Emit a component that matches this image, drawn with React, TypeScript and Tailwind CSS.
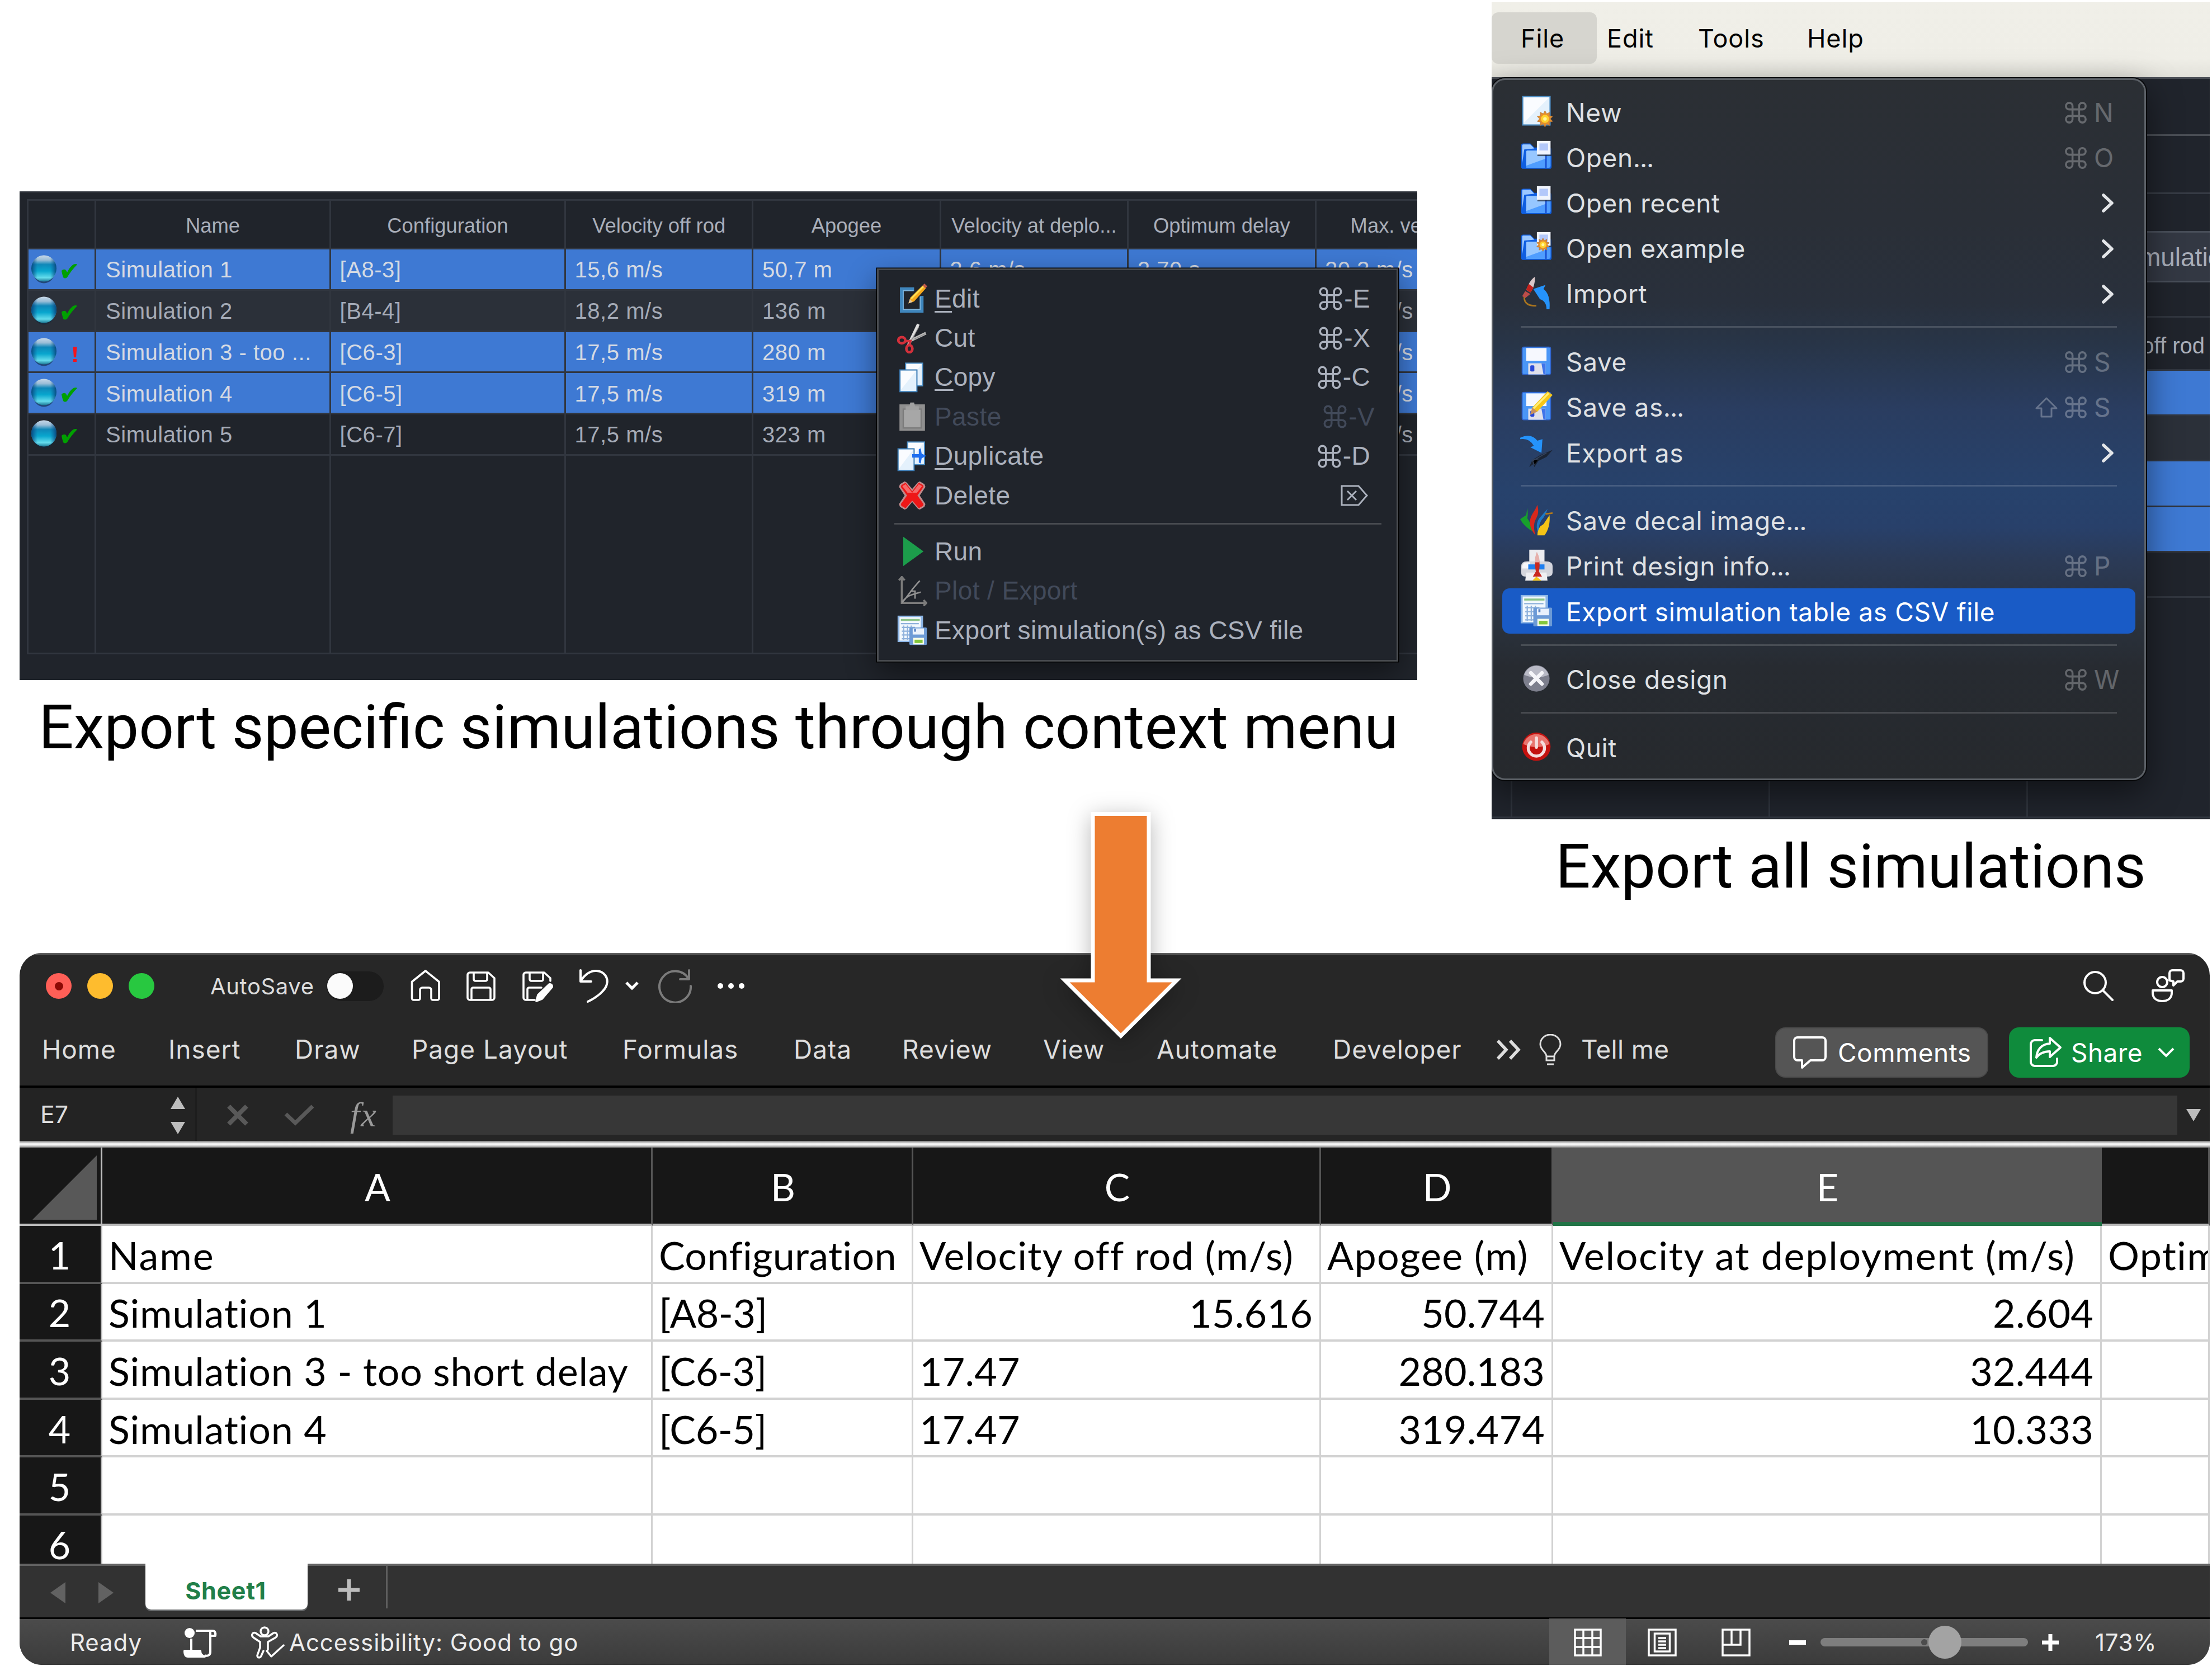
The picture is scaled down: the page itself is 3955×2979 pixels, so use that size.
import React from "react";
import { Command } from "lucide-react";

/* ---------- small coloured menu icons, drawn on a 32 unit grid ---------- */

function Sheet({ x, y, w, h, edge = "#4d8ec4" }: { x: number; y: number; w: number; h: number; edge?: string }) {
  return (
    <g>
      <rect x={x} y={y} width={w} height={h} fill="#e4f1fc" stroke={edge} strokeWidth="1.2" />
      <path d={`M${x + 1} ${y + 1}h${w - 2}L${x + 1} ${y + h - 2}z`} fill="#fff" opacity="0.8" />
    </g>
  );
}

function Burst({ cx, cy, r }: { cx: number; cy: number; r: number }) {
  const pts: string[] = [];
  for (let i = 0; i < 20; i++) {
    const a = (Math.PI * i) / 10;
    const q = i % 2 ? r * 0.66 : r;
    pts.push(`${(cx + q * Math.sin(a)).toFixed(2)},${(cy - q * Math.cos(a)).toFixed(2)}`);
  }
  return (
    <g>
      <polygon points={pts.join(" ")} fill="#e58f2c" stroke="#b5773c" strokeWidth="0.5" />
      <circle cx={cx} cy={cy} r={r * 0.5} fill="#ffd22e" />
      <circle cx={cx} cy={cy} r={r * 0.22} fill="#fff6a0" />
    </g>
  );
}

function Folder({ children }: { children?: React.ReactNode }) {
  return (
    <g>
      <path d="M1 5q0-2 2-2h7l4 4h15q2 0 2 2v17q0 2-2 2H3q-2 0-2-2z" fill="#0f5ee0" />
      <path d="M2 5q0-1 1-1h7l4 4-10 1-2 14z" fill="#9cc8ff" />
      <path d="M6 11q0-1 1-1h23v15q0 2-2 2H6z" fill="#4f9dff" />
      <path d="M6 11q0-1 1-1h10v4h8v4L6 25z" fill="#a9d2ff" opacity="0.8" />
      <path d="M25.5 14v13" stroke="#0c3fc8" strokeWidth="1.2" />
      <rect x="17" y="1.500" width="14" height="14" fill="#20242c" opacity="0.7" />
      <rect x="16.500" y="0.500" width="13.500" height="13.500" fill="#f1f5fd" />
      <rect x="19" y="3" width="8.500" height="7" fill="#b3c8fa" />
      {children}
    </g>
  );
}

function Floppy() {
  return (
    <g>
      <rect x="2" y="2" width="28" height="27" rx="1.500" fill="#4a96f6" stroke="#2f63cc" strokeWidth="1" />
      <rect x="6" y="3" width="20" height="12.500" fill="#f6f8fe" />
      <rect x="8" y="18" width="17" height="11" fill="#dfe0ea" />
      <rect x="10" y="20" width="4" height="6" rx="1" fill="#2848d8" />
      <path d="M21 18h4v11h-2z" fill="#3f74ea" />
    </g>
  );
}

function TableDisk() {
  return (
    <g>
      <rect x="0.500" y="0.500" width="27" height="28" fill="#8db6e6" />
      <rect x="2.500" y="2" width="22.500" height="25" fill="#f2f8fd" />
      <rect x="4" y="4" width="20" height="2" fill="#8cc48a" />
      <path d="M4 9h19M5 13h14M5 17h9M5 21h9M5 25h9M7 11v15M11 11v15M15 11v6" stroke="#8fb2dc" strokeWidth="1.300" />
      <rect x="13" y="13" width="18.500" height="18.500" rx="1" fill="#6c9ad6" />
      <rect x="16.500" y="14" width="12" height="6.500" fill="#e9f1fc" />
      <rect x="18" y="14.500" width="2" height="3" fill="#5a84c4" />
      <rect x="17" y="24" width="11.500" height="7" fill="#f6fbe8" />
      <rect x="18.500" y="26" width="8.500" height="3.500" fill="#83c63c" />
    </g>
  );
}

const icons: Record<string, React.ReactNode> = {
  edit: (
    <g>
      <path d="M26 13v16H5V6h13" fill="none" stroke="#3f86bd" strokeWidth="4" />
      <path d="M24.500 14v13.500H6.500V7.500h11" fill="none" stroke="#7fb5dc" strokeWidth="1" />
      <path d="M12 21l2-6L27 2l3.500 3L18 19z" fill="#f7a81b" />
      <path d="M15 16L28 3" stroke="#ffe35a" strokeWidth="1.600" />
      <path d="M12 21l1.500-4.500 3 3z" fill="#e6c9a0" />
      <path d="M27 2l2-2 3 3-2 2z" fill="#c25b4a" />
    </g>
  ),
  cut: (
    <g fill="none">
      <path d="M12 23L22.500 1" stroke="#dedede" strokeWidth="3" />
      <path d="M13 19L30.500 10.500" stroke="#b9b9b9" strokeWidth="3" />
      <path d="M14 20L23 4M18 17l12-6" stroke="#8b8b8b" strokeWidth="0.800" />
      <ellipse cx="5" cy="18" rx="3.700" ry="3.200" stroke="#d3303b" strokeWidth="2.800" />
      <ellipse cx="13" cy="27" rx="3.200" ry="3.800" stroke="#d3303b" strokeWidth="2.800" />
      <path d="M8 19l6 0-1 4" stroke="#d3303b" strokeWidth="2.600" />
    </g>
  ),
  copy: (
    <g>
      <Sheet x={9} y={0.8} w={18} h={24} />
      <Sheet x={3} y={8} w={18} h={23} edge="#3a7bb4" />
    </g>
  ),
  paste: (
    <g>
      <rect x="2.500" y="3" width="27" height="28" fill="#8f8f8f" />
      <rect x="6.500" y="8" width="19" height="20" fill="#a7a7a7" stroke="#7c7c7c" strokeWidth="1.400" />
      <path d="M9 5h4l1-4h4l1 4h4v4H9z" fill="#a0a0a0" />
    </g>
  ),
  duplicate: (
    <g>
      <Sheet x={11} y={0.8} w={18} h={24} />
      <Sheet x={1} y={8} w={17} h={23} edge="#3a7bb4" />
      <path d="M16 13.700h7V8.500l2-1 1 5.500 5 2.500-5 2.500-1 5.500-2-1v-5.200h-7z" fill="#1f6ff0" />
    </g>
  ),
  delete: (
    <g>
      <path d="M3 4l5-3 2 1 6 7 6-7 2-1 5 3 1 3-6 9 6 9-1 3-5 3-2-1-6-7-6 7-2 1-5-3-1-3 6-9-6-9z" fill="#c08a8c" />
      <path d="M4.500 5L9 2.500l7 9 7-9L27.500 5 28 7l-6.500 9 6.500 9-.5 2L23 29.500l-7-8-7 8L4.500 27 4 25l6.500-9L4 7z" fill="#ee1717" />
      <path d="M5.500 6L9 4l7 9 7-9 3.500 2-5.500 7H11z" fill="#f56a6a" />
    </g>
  ),
  run: <path d="M6.500 0.500L28 16 6.500 31.500z" fill="#1c9d4b" />,
  plot: (
    <g fill="none" stroke="#7b7b7b" strokeWidth="2.200">
      <path d="M5 1v27.500h26M2 4.500L5 1l3 3.500M28 25.500l3 3-3 3" />
      <path d="M5 28C11 23 11 19 24 5M5 28C11 20 15 20 25 17M14 16h5v8" stroke="#929292" strokeWidth="1.600" />
    </g>
  ),
  csv: <TableDisk />,
  new: (
    <g>
      <Sheet x={2.5} y={1.5} w={27} h={28} />
      <Burst cx={24.5} cy={23.5} r={8} />
    </g>
  ),
  open: <Folder />,
  example: (
    <Folder>
      <Burst cx={22.5} cy={13} r={6.5} />
    </Folder>
  ),
  import: (
    <g>
      <path d="M14.500 0q-5 3-8.500 13l4 2.500Q15 9 14.500 0z" fill="#d9c6c8" />
      <path d="M8.500 7q-2 3-2.500 6l4 2.500q2-2 3-5z" fill="#c3221d" />
      <path d="M5 14l-3 5 3 2 5-4z" fill="#bb4d49" />
      <path d="M4 20q0 9 12 8.500" fill="none" stroke="#a8741f" strokeWidth="1.600" />
      <path d="M13 12l12-4-2 4q7 5 6 20h-3q0-8-6.500-10z" fill="#2593fb" />
    </g>
  ),
  save: <Floppy />,
  saveas: (
    <g>
      <Floppy />
      <path d="M10 24l2-7L27 1l5 3.500L17 21z" fill="#f6c718" />
      <path d="M13 18L28 3" stroke="#fff078" strokeWidth="1.800" />
      <path d="M10 24l2-7 5 4z" fill="#c79060" />
    </g>
  ),
  export: (
    <g>
      <path d="M0 2q11-5 17 3l5-1.500L21 17 10 11.500l3.500-1.500Q9 2 0 3.500z" fill="#2593fb" />
      <path d="M9 31l3-7 8-5 12-5-6 7-8 4-4 6-1-3z" fill="#1b2433" />
      <path d="M12 25l14-8M14 29l-2-5 6-1" stroke="#33415a" strokeWidth="1" />
    </g>
  ),
  decal: (
    <g>
      <path d="M0 15l6-4 1-7q1 7 0 10 4 6 7 14Q4 23 0 15z" fill="#17a12c" />
      <path d="M15 31Q6 20 12 10q3-4 5-9 2 8-1 13-4 6-1 17z" fill="#d8281c" />
      <path d="M17 27q-2-8 2-13l8-9q-2 7-6 11-3 5-2 9z" fill="#1d78c4" />
      <path d="M17 31q0-8 6-11l6-9q1 12-5 20z" fill="#f4c417" />
      <path d="M25 10l7-1" stroke="#b57a18" strokeWidth="1.600" />
    </g>
  ),
  print: (
    <g>
      <rect x="9" y="0.500" width="15" height="14" fill="#ececf0" />
      <path d="M1 17q0-5 6-5h18q7 0 7 5v6q0 4-5 4H5q-4 0-4-4z" fill="#d5d6dd" />
      <path d="M2 17q1-4 5-4h3l-2 6H2z" fill="#f6f6fa" />
      <rect x="8" y="15" width="16" height="5" fill="#1f7ff0" />
      <path d="M6 23h20l1 8H5z" fill="#efeff2" />
      <path d="M16.500 3q4 9 2 19l3 5h-9l3-5q-2-10 1-19z" fill="#c9281f" />
      <path d="M16.500 3q3 5 2.500 10h-4.500q0-6 2-10z" fill="#e6b0ac" />
      <path d="M12 31l4-4 5 4z" fill="#f4c417" />
    </g>
  ),
  close: (
    <g>
      <circle cx="16" cy="15.500" r="13" fill="#7d7f8d" />
      <path d="M4 12a12.500 12.500 0 0 1 24 0q-12 5-24 0z" fill="#b9bac6" />
      <path d="M10.500 10l11 11M21.500 10l-11 11" stroke="#f4f4f8" strokeWidth="3.600" strokeLinecap="round" />
    </g>
  ),
  quit: (
    <g>
      <circle cx="16" cy="15.500" r="14" fill="#c4120f" />
      <path d="M3 13a13.500 13.500 0 0 1 26 0q-13 6-26 0z" fill="#e8756f" />
      <path d="M10.500 11a8 8 0 1 0 11 0" fill="none" stroke="#f4dcdc" strokeWidth="3" strokeLinecap="round" />
      <path d="M16 7v9" stroke="#f4dcdc" strokeWidth="3.200" strokeLinecap="round" />
    </g>
  ),
};

function MenuIcon({ name, className }: { name: string; className: string }) {
  return (
    <svg viewBox="0 0 32 32" className={className}>
      {icons[name]}
    </svg>
  );
}

/* ---------- simulation table with its context menu ---------- */

const simCols = "grid grid-cols-[121px_420px_420px_335.4px_335.4px_335.4px_335.4px_335.4px]";
const simHeaders = ["", "Name", "Configuration", "Velocity off rod", "Apogee", "Velocity at deplo...", "Optimum delay", "Max. velocity"];

const sims = [
  { sel: true, ok: true, bg: "bg-[#3e79d3]", cells: ["Simulation 1", "[A8-3]", "15,6 m/s", "50,7 m", "2,6 m/s", "2,70 s", "20,3 m/s"] },
  { sel: false, ok: true, bg: "bg-[#2b3039]", cells: ["Simulation 2", "[B4-4]", "18,2 m/s", "136 m", "", "", "48,1 m/s"] },
  { sel: true, ok: false, bg: "bg-[#3e79d3]", cells: ["Simulation 3 - too ...", "[C6-3]", "17,5 m/s", "280 m", "", "", "97,4 m/s"] },
  { sel: true, ok: true, bg: "bg-[#3e79d3]", cells: ["Simulation 4", "[C6-5]", "17,5 m/s", "319 m", "", "", "97,4 m/s"] },
  { sel: false, ok: true, bg: "bg-[#20242b]", cells: ["Simulation 5", "[C6-7]", "17,5 m/s", "323 m", "", "", "97,4 m/s"] },
];

function StatusCell({ ok }: { ok: boolean }) {
  return (
    <svg viewBox="0 0 118 70" className="h-[70px] w-[118px]">
      <defs>
        <linearGradient id="ball" x1="0" y1="0" x2="0" y2="1">
          <stop offset="0" stopColor="#e8eef6" />
          <stop offset="0.180" stopColor="#b4cfe2" />
          <stop offset="0.350" stopColor="#0f8fbe" />
          <stop offset="0.600" stopColor="#08b4d8" />
          <stop offset="0.850" stopColor="#74f2fa" />
          <stop offset="1" stopColor="#1f7f96" />
        </linearGradient>
        <linearGradient id="ballEdge" x1="0" y1="0" x2="1" y2="0">
          <stop offset="0" stopColor="#0a3f78" stopOpacity="0.9" />
          <stop offset="0.250" stopColor="#0a5a98" stopOpacity="0.15" />
          <stop offset="0.750" stopColor="#0a5a98" stopOpacity="0.15" />
          <stop offset="1" stopColor="#0a3f78" stopOpacity="0.9" />
        </linearGradient>
      </defs>
      <ellipse cx="27.500" cy="38" rx="20" ry="22.500" fill="#10283f" opacity="0.6" />
      <ellipse cx="27.500" cy="34" rx="22.500" ry="23.500" fill="url(#ball)" />
      <ellipse cx="27.500" cy="34" rx="22.500" ry="23.500" fill="url(#ballEdge)" />
      {ok ? (
        <path d="M59 38q4-4 8-1l2 4Q74 31 80 27q5-2 7 0-10 10-18 23-4 3-7 0-2-6-3-12z" fill="#00a000" />
      ) : (
        <path d="M79.500 26h7l-1.500 19h-4zM80 48h6v5h-6z" fill="#f5141c" />
      )}
    </svg>
  );
}

const ctxItems = [
  { icon: "edit", m: "E", rest: "dit", key: "E" },
  { icon: "cut", m: "", rest: "Cut", key: "X" },
  { icon: "copy", m: "C", rest: "opy", key: "C" },
  { icon: "paste", m: "", rest: "Paste", key: "V", off: true },
  { icon: "duplicate", m: "D", rest: "uplicate", key: "D" },
  { icon: "delete", m: "", rest: "Delete", key: "del" },
  null,
  { icon: "run", m: "", rest: "Run" },
  { icon: "plot", m: "", rest: "Plot / Export", off: true },
  { icon: "csv", m: "", rest: "Export simulation(s) as CSV file" },
];

function ContextMenu() {
  return (
    <div className="absolute left-[1533px] top-[136px] h-[703px] w-[932px] border-[3px] border-[#494c50] bg-[#20242b] pt-[16px] text-[46px] tracking-[0.4px] shadow-[0_0_0_1.5px_#000,0_20px_50px_rgba(0,0,0,0.45)]">
      {ctxItems.map((it, i) =>
        it === null ? (
          <div key={i} className="flex h-[29.8px] items-center pl-[28px] pr-[27px]">
            <div className="h-[3px] w-full bg-[#484b50]" />
          </div>
        ) : (
          <div key={i} className={`flex h-[70.4px] items-center pl-[33px] ${it.off ? "pr-[39px] text-[#424a5a]" : "pr-[47px] text-[#abb1bd]"}`}>
            <MenuIcon name={it.icon} className="h-[54px] w-[54px]" />
            <span className="ml-[13px] flex-1 whitespace-pre">
              {it.m && <span className="underline decoration-[3px] underline-offset-[6px]">{it.m}</span>}
              {it.rest}
            </span>
            {it.key === "del" ? (
              <svg viewBox="0 0 50 38" className="mr-[3px] h-[38px] w-[50px]" fill="none" stroke="#abb1bd" strokeWidth="3">
                <path d="M2 2h30l15 17-15 17H2zM12 11l16 16M28 11L12 27" />
              </svg>
            ) : (
              it.key && (
                <span className="flex items-center">
                  <Command className="-mr-[1px] h-[50px] w-[50px]" strokeWidth={1.7} />-{it.key}
                </span>
              )
            )}
          </div>
        ),
      )}
    </div>
  );
}

function SimulationPanel() {
  return (
    <div className="relative h-[874px] w-[2499px] overflow-hidden border-t-2 border-[#4a4e55] bg-[#20242b] pl-[13px] pt-[12px] font-['Liberation_Sans',Arial,sans-serif]">
      <div className="w-[2640px] border-l-[3px] border-t-[3px] border-[#31363f]">
        <div className={`${simCols} h-[87px] text-[36.4px] text-[#a9aeb9]`}>
          {simHeaders.map((h, i) => (
            <div key={i} className="flex items-center justify-center whitespace-nowrap border-b-[3px] border-r-[3px] border-[#31363f] pt-[6px]">
              {h}
            </div>
          ))}
        </div>
        {sims.map((s, r) => (
          <div key={r} className={`${simCols} h-[73.75px] text-[40px] tracking-[0.55px] ${s.bg} ${s.sel ? "text-[#d5dae3]" : "text-[#a5abb7]"}`}>
            <div className="overflow-hidden border-b-[3px] border-r-[3px] border-[#31363f]">
              <StatusCell ok={s.ok} />
            </div>
            {s.cells.map((c, i) => (
              <div key={i} className={`flex items-center whitespace-nowrap border-b-[3px] border-r-[3px] border-[#31363f] pt-[2px] ${i === 0 ? "pl-[17px]" : "pl-[15.5px]"}`}>
                {c}
              </div>
            ))}
          </div>
        ))}
        <div className={`${simCols} h-[355px]`}>
          {simHeaders.map((_, i) => (
            <div key={i} className="border-b-[3px] border-r-[3px] border-[#31363f]" />
          ))}
        </div>
      </div>
      <ContextMenu />
    </div>
  );
}

/* ---------- application window with the File menu open ---------- */

const fileItems: (null | { icon: string; label: string; more?: boolean; key?: string; shift?: boolean; sub?: boolean; sel?: boolean })[] = [
  { icon: "new", label: "New", key: "N" },
  { icon: "open", label: "Open", more: true, key: "O" },
  { icon: "open", label: "Open recent", sub: true },
  { icon: "example", label: "Open example", sub: true },
  { icon: "import", label: "Import", sub: true },
  null,
  { icon: "save", label: "Save", key: "S" },
  { icon: "saveas", label: "Save as", more: true, key: "S", shift: true },
  { icon: "export", label: "Export as", sub: true },
  null,
  { icon: "decal", label: "Save decal image", more: true },
  { icon: "print", label: "Print design info", more: true, key: "P" },
  { icon: "csv", label: "Export simulation table as CSV file", sel: true },
  null,
  { icon: "close", label: "Close design", key: "W" },
  null,
  { icon: "quit", label: "Quit" },
];

function FileMenu() {
  return (
    <div className="absolute left-0 top-[136px] h-[1255px] w-[1170px] rounded-[24px] border-[3px] border-[#5c6167] bg-[linear-gradient(180deg,#2b2f34_0%,#2a2f37_20%,#29303c_32%,#283548_38%,#2a3d60_47%,#27426c_59%,#28406a_64%,#2b3a56_69%,#2a323d_78%,#272b31_84%,#26292d_100%)] pt-[15.5px] text-[46px] tracking-[0.62px] text-[#dfe1e4] shadow-[0_0_0_2px_#08090b,0_20px_60px_rgba(0,0,0,0.5)]">
      {fileItems.map((it, i) =>
        it === null ? (
          <div key={i} className="flex h-[40.6px] items-center pl-[49px] pr-[49px]">
            <div className="h-[3px] w-full bg-white/15" />
          </div>
        ) : (
          <div key={i} className={`mx-[16px] flex h-[81.2px] items-center rounded-[13px] pl-[32px] ${it.sel ? "bg-[#195bc6] text-white" : ""}`}>
            <MenuIcon name={it.icon} className="h-[58px] w-[58px]" />
            <span className="ml-[24px] flex-1 whitespace-nowrap pt-[4px]">
              {it.label}
              {it.more && <span className="tracking-[-1.2px]">...</span>}
            </span>
            {it.shift && (
              <svg viewBox="0 0 42 38" className="mr-[8px] mt-[4px] h-[38px] w-[42px] text-white/28" fill="none" stroke="currentColor" strokeWidth="3" strokeLinejoin="round">
                <path d="M21 2L3 20h9v15h18V20h9z" />
              </svg>
            )}
            {it.key && (
              <span className="flex w-[130px] items-center pt-[4px] text-white/28">
                <Command className="mr-[9px] h-[47px] w-[47px]" strokeWidth={1.8} />
                {it.key}
              </span>
            )}
            {it.sub && (
              <svg viewBox="0 0 24 38" className="mr-[37px] mt-[4px] h-[38px] w-[24px]" fill="none" stroke="#e3e5e8" strokeWidth="5.500" strokeLinecap="round" strokeLinejoin="round">
                <path d="M4 5l15 14L4 33" />
              </svg>
            )}
          </div>
        ),
      )}
    </div>
  );
}

function AppPanel() {
  return (
    <div className="relative flex h-[1461px] w-[1284px] flex-col overflow-hidden bg-[#20242c] font-['Inter',sans-serif]">
      <div className="flex h-[134px] shrink-0 items-start bg-[linear-gradient(180deg,#f0efe8_0%,#efeee7_75%,#e2e1da_100%)] pt-[18px] text-[45px] tracking-[0.9px] text-black">
        <div className="flex h-[92px] w-[188px] items-center rounded-[12px] bg-[#d6d5cf] pl-[52px] pt-[2px]">File</div>
        <div className="flex h-[92px] w-[181px] items-center pl-[18px] pt-[2px]">Edit</div>
        <div className="flex h-[92px] w-[195px] items-center pt-[2px]">Tools</div>
        <div className="flex h-[92px] items-center pt-[2px]">Help</div>
      </div>
      <div className="h-[105px] shrink-0 border-b-[3px] border-t-[3px] border-[#4a4e55]" />
      <div className="h-[104px] shrink-0 border-b-[3px] border-[#363b44]" />
      <div className="h-[66px] shrink-0" />
      <div className="flex h-[92px] shrink-0 items-center border-b-[3px] border-t-[3px] border-[#484e59] bg-[#333843] pl-[1117px] pt-[3px] font-['Liberation_Sans',sans-serif] text-[46px] text-[#a9aeb9]">
        Simulations
      </div>
      <div className="h-[63px] shrink-0 border-b-[3px] border-[#31363f]" />
      <div className="flex h-[95px] shrink-0 items-center justify-end border-b-[3px] border-[#31363f] pr-[9px] pt-[8px] font-['Liberation_Sans',sans-serif] text-[40px] text-[#a9aeb9]">
        Velocity off rod
      </div>
      <div className="h-[81.2px] shrink-0 border-b-[3px] border-[#31363f] bg-[#3e79d3]" />
      <div className="h-[81.2px] shrink-0 border-b-[3px] border-[#31363f] bg-[#2b3039]" />
      <div className="h-[81.2px] shrink-0 border-b-[3px] border-[#31363f] bg-[#3e79d3]" />
      <div className="h-[81.2px] shrink-0 border-b-[3px] border-[#31363f] bg-[#3e79d3]" />
      <div className="h-[81.2px] shrink-0 border-b-[3px] border-[#31363f]" />
      <div className="grid h-[394px] shrink-0 grid-cols-[37px_461px_461px_1fr] border-b-[3px] border-[#31363f]">
        <div className="border-r-[3px] border-[#2f343d]" />
        <div className="border-r-[3px] border-[#2f343d]" />
        <div className="border-r-[3px] border-[#2f343d]" />
      </div>
      <FileMenu />
    </div>
  );
}

/* ---------- spreadsheet window ---------- */

function Glyph({ className, sw = 4, children }: { className: string; sw?: number; children: React.ReactNode }) {
  return (
    <svg viewBox="0 0 60 60" className={`h-[60px] w-[60px] shrink-0 ${className}`} fill="none" stroke="currentColor" strokeWidth={sw} strokeLinejoin="round" strokeLinecap="round">
      {children}
    </svg>
  );
}

function TitleBar() {
  return (
    <div className="flex h-[118px] items-center pl-[47px] text-white">
      <div className="flex h-[46px] w-[46px] items-center justify-center rounded-full bg-[#ff5f57]">
        <div className="h-[15px] w-[15px] rounded-full bg-[#8c0a05]" />
      </div>
      <div className="ml-[28px] h-[46px] w-[46px] rounded-full bg-[#febc2e]" />
      <div className="ml-[28px] h-[46px] w-[46px] rounded-full bg-[#28c840]" />
      <span className="ml-[100px] w-[208px] whitespace-nowrap pt-[2px] text-[40px] tracking-[0.65px] text-[#dcdcdc]">AutoSave</span>
      <div className="flex h-[53px] w-[102px] items-center rounded-full bg-[#1c1c1c] pl-[1px]">
        <div className="h-[46px] w-[46px] rounded-full bg-[#fbfbfb]" />
      </div>
      <Glyph className="ml-[45px]" sw={3.6}>
        <path d="M29.700 3L54 22.500V52a3 3 0 0 1-3 3h-8a3 3 0 0 1-3-3V37a4 4 0 0 0-4-4H24a4 4 0 0 0-4 4v15a3 3 0 0 1-3 3H8.500a3 3 0 0 1-3-3V22.500z" />
      </Glyph>
      <Glyph className="ml-[39px]" sw={3.6}>
        <path d="M10 6h33l11 10v35a4 4 0 0 1-4 4H10a4 4 0 0 1-4-4V10a4 4 0 0 1 4-4zM17 6v12a3 3 0 0 0 3 3h18a3 3 0 0 0 3-3V6M13 55V36a3 3 0 0 1 3-3h28a3 3 0 0 1 3 3v19" />
      </Glyph>
      <Glyph className="ml-[40px]" sw={3.6}>
        <path d="M26 55H10a4 4 0 0 1-4-4V10a4 4 0 0 1 4-4h33l11 10v5M17 6v12a3 3 0 0 0 3 3h18a3 3 0 0 0 3-3V6M13 55V36a3 3 0 0 1 3-3h22" />
        <path d="M29 57l3-11 20-19a4 4 0 0 1 5 5L39 53z" fill="currentColor" />
      </Glyph>
      <Glyph className="ml-[43px]">
        <path d="M5 2v20h19M5 21C14 8 24 2 34 3c14 1 21 13 18 24-2 10-18 24-34 31" />
      </Glyph>
      <svg viewBox="0 0 24 16" className="ml-[25px] h-[16px] w-[24px]" fill="none" stroke="currentColor" strokeWidth="5">
        <path d="M2 2l10 10L22 2" />
      </svg>
      <Glyph className="ml-[35px] text-[#7b7b7b]">
        <path d="M55 2v16H39M54 17A28 28 0 1 0 58 30" />
      </Glyph>
      <div className="ml-[46px] flex gap-[9px]">
        <div className="h-[10px] w-[10px] rounded-full bg-white" />
        <div className="h-[10px] w-[10px] rounded-full bg-white" />
        <div className="h-[10px] w-[10px] rounded-full bg-white" />
      </div>
      <Glyph className="ml-auto">
        <circle cx="24" cy="24" r="19" />
        <path d="M38 38l17 17" />
      </Glyph>
      <Glyph className="ml-[64px] mr-[45px]">
        <circle cx="20" cy="23" r="9" />
        <path d="M3 38h34v4c0 10-7 15-17 15S3 52 3 42zM33 20V7a5 5 0 0 1 5-5h15a5 5 0 0 1 5 5v10a5 5 0 0 1-5 5h-6l-7 7v-7z" />
      </Glyph>
    </div>
  );
}

const ribbon = [
  { t: "Home", w: "w-[226px]" },
  { t: "Insert", w: "w-[226px]" },
  { t: "Draw", w: "w-[209px]" },
  { t: "Page Layout", w: "w-[377px]" },
  { t: "Formulas", w: "w-[306px]" },
  { t: "Data", w: "w-[194px]" },
  { t: "Review", w: "w-[252px]" },
  { t: "View", w: "w-[203px]" },
  { t: "Automate", w: "w-[315px]" },
  { t: "Developer", w: "w-[288px]" },
];

function RibbonTabs() {
  return (
    <div className="flex h-[119px] items-center pl-[40px] text-[46px] text-[#dedede]">
      <div className="flex items-center whitespace-nowrap pb-[10px] tracking-[0.95px]">
        {ribbon.map((r) => (
          <span key={r.t} className={r.w}>
            {r.t}
          </span>
        ))}
        <svg viewBox="0 0 46 36" className="ml-[4px] h-[36px] w-[46px]" fill="none" stroke="currentColor" strokeWidth="5.500">
          <path d="M3 2l15 16L3 34M25 2l15 16-15 16" />
        </svg>
        <svg viewBox="0 0 40 56" className="ml-[31px] h-[56px] w-[40px]" fill="none" stroke="currentColor" strokeWidth="3">
          <path d="M13 40c0-8-11-11-11-22a18 17 0 0 1 36 0c0 11-11 14-11 22zM13 40v7h14v-7M14 54h12" />
        </svg>
        <span className="ml-[35px] tracking-[0.3px]">Tell me</span>
      </div>
      <div className="ml-auto flex h-[90px] w-[381px] items-center rounded-[18px] border-2 border-[#4a4a4a] bg-[#555] pl-[30px] text-white">
        <Glyph className="">
          <path d="M8 3h44a6 6 0 0 1 6 6v29a6 6 0 0 1-6 6H31L16 57V44H8a6 6 0 0 1-6-6V9a6 6 0 0 1 6-6z" />
        </Glyph>
        <span className="ml-[20px] pt-[2px] tracking-[0.5px]">Comments</span>
      </div>
      <div className="ml-[37px] mr-[36px] flex h-[90px] w-[323px] items-center rounded-[18px] bg-[#0f8b3c] pl-[35px] text-white">
        <Glyph className="">
          <path d="M24 8H11a7 7 0 0 0-7 7v32a7 7 0 0 0 7 7h33a7 7 0 0 0 7-7v-6" />
          <path d="M38 4l19 17-19 17V28c-11 0-18 3-24 11 1-14 9-24 24-25z" />
        </Glyph>
        <span className="ml-[16px] w-[155px] pt-[2px] tracking-[0.4px]">Share</span>
        <svg viewBox="0 0 30 18" className="h-[18px] w-[30px]" fill="none" stroke="currentColor" strokeWidth="4">
          <path d="M2 2l13 13L28 2" />
        </svg>
      </div>
    </div>
  );
}

function FormulaBar() {
  return (
    <div className="flex h-[99px] items-stretch border-t-[4px] border-black bg-[#252525]">
      <div className="flex w-[317px] items-center border-r-[3px] border-[#1d1d1d] bg-[#232323] pl-[37px]">
        <span className="w-[233px] text-[43px] text-[#dedede]">E7</span>
        <svg viewBox="0 0 26 67" className="mt-[3px] h-[67px] w-[26px]" fill="#bdbdbd">
          <path d="M0 22L13 0l13 22zM0 45h26L13 67z" />
        </svg>
      </div>
      <svg viewBox="0 0 38 38" className="ml-[54px] mt-[3px] h-[38px] w-[38px] self-center" fill="none" stroke="#595959" strokeWidth="8">
        <path d="M3 3l32 32M35 3L3 35" />
      </svg>
      <svg viewBox="0 0 54 38" className="ml-[64px] mt-[3px] h-[38px] w-[54px] self-center" fill="none" stroke="#595959" strokeWidth="7">
        <path d="M3 17l17 16L51 3" />
      </svg>
      <span className="ml-[64px] w-[76px] self-center font-['Liberation_Serif',serif] text-[62px] italic leading-[60px] tracking-[2px] text-[#9a9a9a]">fx</span>
      <div className="my-[14px] h-[70px] w-[3191px] bg-[#373737]" />
      <svg viewBox="0 0 26 22" className="ml-[16px] mt-[3px] h-[22px] w-[26px] self-center" fill="#bdbdbd">
        <path d="M0 0h26L13 22z" />
      </svg>
    </div>
  );
}

const sheetCols = "grid grid-cols-[148px_984px_466px_729px_415px_981px_1fr]";
const letters = ["A", "B", "C", "D", "E", ""];
const sheetRows: string[][] = [
  ["Name", "Configuration", "Velocity off rod (m/s)", "Apogee (m)", "Velocity at deployment (m/s)", "Optimum delay (s)"],
  ["Simulation 1", "[A8-3]", ">15.616", ">50.744", ">2.604", ""],
  ["Simulation 3 - too short delay", "[C6-3]", "17.47", ">280.183", ">32.444", ""],
  ["Simulation 4", "[C6-5]", "17.47", ">319.474", ">10.333", ""],
  ["", "", "", "", "", ""],
  ["", "", "", "", "", ""],
];

function cellTracking(text: string, col: number) {
  if (text.startsWith("[")) return "tracking-[-0.4px]";
  if (/^>?\d/.test(text)) return "tracking-[0.2px]";
  if (col === 4) return "tracking-[1.7px]";
  if (text.startsWith("Sim")) return "tracking-[0.8px]";
  if (text === "Name") return "tracking-[2px]";
  if (text === "Configuration") return "tracking-[0.3px]";
  return "tracking-[1.3px]";
}

function SheetGrid() {
  return (
    <div className="h-[744px] overflow-hidden bg-white font-['Lato',sans-serif] text-[70px] leading-[80px] [font-variant-ligatures:none]">
      <div className={`${sheetCols} h-[140px] bg-[#171717] text-white`}>
        <div className="flex items-end justify-end border-b-[4px] border-r-[3px] border-[#bdbdbd] pb-[7px] pr-[7px]">
          <svg viewBox="0 0 115 115" className="h-[115px] w-[115px]">
            <path d="M0 115L115 0v115z" fill="#585858" />
          </svg>
        </div>
        {letters.map((l, i) => (
          <div
            key={i}
            className={`flex items-center justify-center text-[68px] ${
              l === "E" ? "border-b-[7px] border-[#217346] bg-[#555] pt-[6px]" : "border-b-[4px] border-r-[3px] border-b-[#bdbdbd] border-r-[#555] pl-[3px] pt-[4px]"
            }`}
          >
            {l}
          </div>
        ))}
      </div>
      {sheetRows.map((row, r) => (
        <div key={r} className={`${sheetCols} h-[103.6px]`}>
          <div className="flex items-center justify-center border-b-[4px] border-r-[3px] border-b-[#555] border-r-[#bdbdbd] bg-[#171717] pr-[2px] pt-[4px] text-[68px] text-white">{r + 1}</div>
          {row.map((c, i) => (
            <div
              key={i}
              className={`flex items-center overflow-hidden whitespace-nowrap border-b-[4px] border-r-[3px] border-[#d2d2d2] pl-[11px] pr-[12px] pt-[4px] text-black ${cellTracking(c, i)} ${
                c.startsWith(">") ? "justify-end" : ""
              }`}
            >
              {c.replace(">", "")}
            </div>
          ))}
        </div>
      ))}
    </div>
  );
}

function SheetTabs() {
  return (
    <div className="flex h-[96px] items-start bg-[#323232]">
      <div className="flex h-[96px] w-[225px] items-center gap-[59px] border-t-[4px] border-[#626262] pl-[55px] pt-[3px]">
        <svg viewBox="0 0 27 38" className="h-[38px] w-[27px]" fill="#626262">
          <path d="M27 0v38L0 19z" />
        </svg>
        <svg viewBox="0 0 27 38" className="h-[38px] w-[27px]" fill="#626262">
          <path d="M0 0v38l27-19z" />
        </svg>
      </div>
      <div className="flex h-[82px] w-[290px] items-center justify-center rounded-b-[10px] bg-white text-[43px] font-bold tracking-[0.7px] text-[#217f49] shadow-[0_3px_0_#66696b]">
        <span className="pr-[3px] pt-[14px]">Sheet1</span>
      </div>
      <div className="flex h-[96px] flex-1 border-t-[4px] border-[#626262]">
        <div className="flex h-[76px] w-[143px] items-center border-r-[3px] border-[#5f5f5f] pl-[55px] pt-[10px]">
          <svg viewBox="0 0 38 38" className="h-[38px] w-[38px]" stroke="#bdbdbd" strokeWidth="7">
            <path d="M19 0v38M0 19h38" />
          </svg>
        </div>
      </div>
    </div>
  );
}

function StatusBar() {
  return (
    <div className="flex h-[86px] items-center border-t-[3px] border-black bg-[linear-gradient(180deg,#4b4b4b_0%,#3b3b3b_100%)] pl-[90px] text-[42px] text-[#ececec]">
      <span className="w-[203px] tracking-[0.9px]">Ready</span>
      <svg viewBox="0 0 60 54" className="h-[54px] w-[60px]" fill="none" stroke="#fff" strokeWidth="4" strokeLinejoin="round">
        <circle cx="11" cy="10" r="9" fill="#fff" stroke="none" />
        <path d="M22 6h30c4 0 6 3 5 9h-9M48 8v36c0 6-6 8-10 6M14 20v26" />
        <path d="M2 42h28c0 6 3 9 8 10H8c-4 0-6-4-6-10z" fill="#fff" />
      </svg>
      <svg viewBox="0 0 64 58" className="ml-[60px] h-[58px] w-[64px]" fill="none" stroke="#fff" strokeWidth="3.500" strokeLinejoin="round" strokeLinecap="round">
        <circle cx="25" cy="9" r="7" />
        <path d="M31 42V28l14-8c5-4 1-10-4-8l-9 6H18l-9-6c-5-2-9 4-4 8l12 8v10l-5 14c0 5 5 5 7 1l4-9M29 44l8 10 22-20" />
      </svg>
      <span className="ml-[5px] whitespace-nowrap tracking-[0.9px]">Accessibility: Good to go</span>
      <div className="ml-auto flex h-[86px] w-[137px] items-center justify-center bg-[#5c5c5c]">
        <svg viewBox="0 0 50 50" className="h-[50px] w-[50px]" fill="none" stroke="#fff" strokeWidth="3.500">
          <path d="M2 2h46v46H2zM17 2v46M33 2v46M2 17h46M2 33h46" />
        </svg>
      </div>
      <svg viewBox="0 0 52 50" className="ml-[39px] h-[50px] w-[52px]" fill="none" stroke="#fff" strokeWidth="3.500">
        <path d="M2 2h48v46H2zM12.500 9h27v32h-27zM19 17h14M19 23h14M19 29h14M19 35h14" />
      </svg>
      <svg viewBox="0 0 52 50" className="ml-[80px] h-[50px] w-[52px]" fill="none" stroke="#fff" strokeWidth="3.500">
        <path d="M2 2h48v46H2zM18 2v27M34 2v27H2" />
      </svg>
      <div className="ml-[69px] h-[8px] w-[30px] bg-white" />
      <div className="relative ml-[26px] h-[15px] w-[371px] rounded-full bg-[#7e7e7e]">
        <div className="absolute left-[180px] top-[2px] h-[11px] w-[11px] rounded-full bg-[#4c4c4c]" />
        <div className="absolute left-[193px] top-[-22px] h-[59px] w-[59px] rounded-full bg-[#a3a3a3]" />
      </div>
      <svg viewBox="0 0 30 30" className="ml-[25px] h-[30px] w-[30px]" stroke="#fff" strokeWidth="7">
        <path d="M15 0v30M0 15h30" />
      </svg>
      <span className="ml-[65px] w-[205px] tracking-[0.7px]">173%</span>
    </div>
  );
}

function SpreadsheetWindow() {
  return (
    <div className="ml-[35px] h-[1273px] w-[3916px] overflow-hidden rounded-[40px] bg-[#272727] font-['Inter',sans-serif]">
      <div className="h-[237px] border-t-[3px] border-[#606060]">
        <div className="-mt-[3px]">
          <TitleBar />
          <RibbonTabs />
        </div>
      </div>
      <FormulaBar />
      <div className="h-[12px] bg-[linear-gradient(180deg,#777_0%,#fff_45%,#eee_60%,#888_100%)]" />
      <SheetGrid />
      <SheetTabs />
      <StatusBar />
    </div>
  );
}

function DownArrow() {
  return (
    <svg viewBox="0 0 300 460" className="absolute left-[1853px] top-[1430px] h-[460px] w-[300px] drop-shadow-[0_8px_20px_rgba(0,0,0,0.28)]">
      <path d="M104.500 29h93v297.500h45L151 417.500 59.500 326.500h45z" fill="#ed7d31" stroke="#fff" strokeWidth="14" paintOrder="stroke" />
    </svg>
  );
}

export default function App() {
  return (
    <div className="relative h-[2979px] w-[3955px] overflow-hidden bg-white">
      <div className="flex h-[1704px] items-start">
        <div className="ml-[35px] mt-[342px] w-[2499px]">
          <SimulationPanel />
          <p className="mt-[20px] whitespace-nowrap text-center font-['Roboto',sans-serif] text-[110.3px] leading-[130px] text-black">
            Export specific simulations through context menu
          </p>
        </div>
        <div className="ml-[133px] mt-[4px] w-[1284px]">
          <AppPanel />
          <p className="mt-[20px] whitespace-nowrap text-center font-['Roboto',sans-serif] text-[110px] leading-[130px] text-black">
            Export all simulations
          </p>
        </div>
      </div>
      <SpreadsheetWindow />
      <DownArrow />
    </div>
  );
}
